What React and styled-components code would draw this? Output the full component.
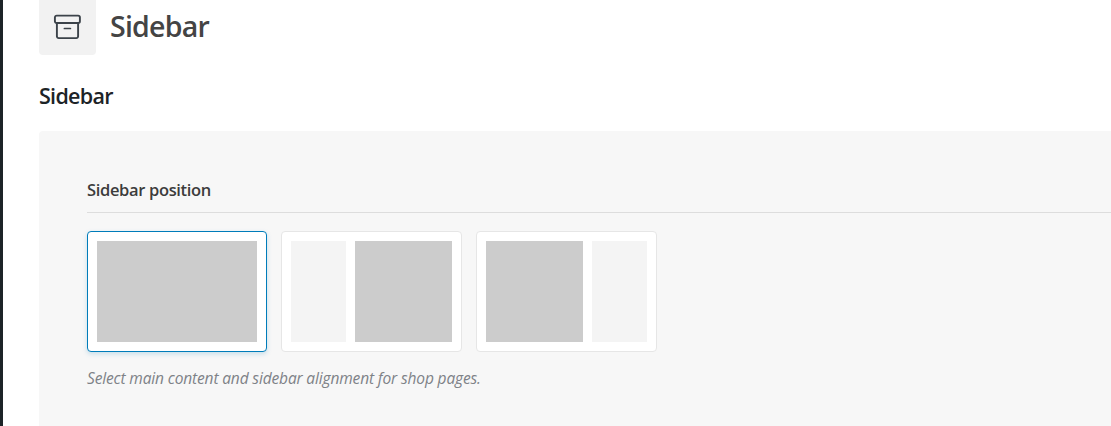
import React, { useState } from 'react';
import styled, { createGlobalStyle } from 'styled-components';

const layouts = [
  { id: 'none', width: 180, blocks: ['content'] },
  { id: 'left', width: 181, blocks: ['sidebar', 'content'] },
  { id: 'right', width: 181, blocks: ['content', 'sidebar'] },
];

const App = () => {
  const [position, setPosition] = useState('none');

  return (
    <>
      <GlobalStyle />
      <Page>
        <Main>
          <Header>
            <IconBox>
              <svg width="29" height="27" viewBox="0 0 29 27" fill="none" stroke="#3c434a" strokeWidth="1.9">
                <rect x="1.9" y="1.6" width="25" height="7.4" rx="1.8" />
                <path d="M3.9 9V22.3a1.8 1.8 0 0 0 1.8 1.8H23.3a1.8 1.8 0 0 0 1.8-1.8V9" />
                <path d="M11.4 14.5H17.4" strokeWidth="1.7" strokeLinecap="round" />
              </svg>
            </IconBox>
            <Title>Sidebar</Title>
          </Header>
          <SectionTitle>Sidebar</SectionTitle>
          <Panel>
            <FieldTitle>Sidebar position</FieldTitle>
            <Options>
              {layouts.map(({ id, width, blocks }) => (
                <Option
                  key={id}
                  type="button"
                  aria-label={id}
                  $width={width}
                  $active={position === id}
                  onClick={() => setPosition(id)}
                >
                  {blocks.map((block) => (
                    <Block key={block} $kind={block} />
                  ))}
                </Option>
              ))}
            </Options>
            <Description>Select main content and sidebar alignment for shop pages.</Description>
          </Panel>
        </Main>
      </Page>
    </>
  );
};

const GlobalStyle = createGlobalStyle`
  * {
    box-sizing: border-box;
  }
  body {
    margin: 0;
    overflow: hidden;
    background: #fff;
    font-family: 'Segoe UI', 'Open Sans', 'Noto Sans', sans-serif;
  }
`;

const Page = styled.div`
  height: 426px;
  overflow: hidden;
  border-left: 3px solid #1d2327;
`;

const Main = styled.main`
  padding-left: 36px;
`;

const Header = styled.header`
  display: flex;
  align-items: center;
  height: 55px;
`;

const IconBox = styled.div`
  display: flex;
  align-items: center;
  justify-content: center;
  width: 57px;
  height: 55px;
  margin-right: 14px;
  background: #f2f2f2;
  border-radius: 0 0 4px 4px;
`;

const Title = styled.h1`
  margin: 0 0 3px;
  font-size: 28.5px;
  line-height: 40px;
  font-weight: 600;
  letter-spacing: -0.75px;
  color: #444;
`;

const SectionTitle = styled.h2`
  margin: 26px 0 21px;
  font-size: 21.5px;
  line-height: 29px;
  font-weight: 600;
  letter-spacing: -0.7px;
  color: #1d2327;
`;

const Panel = styled.section`
  height: 320px;
  padding: 48px 0 0 48px;
  background: #f7f7f7;
  border-radius: 4px 0 0 0;
`;

const FieldTitle = styled.h3`
  height: 34px;
  margin: 0 0 18px;
  border-bottom: 1px solid #ddd;
  font-size: 16.5px;
  line-height: 22px;
  font-weight: 600;
  letter-spacing: -0.34px;
  color: #3c3c3c;
`;

const Options = styled.div`
  display: flex;
  gap: 14px;
`;

const Option = styled.button`
  display: flex;
  gap: 9px;
  width: ${({ $width }) => $width}px;
  height: 121px;
  padding: 9px;
  cursor: pointer;
  background: #fff;
  border: 1px solid ${({ $active }) => ($active ? '#007cba' : '#e6e6e6')};
  border-radius: 4px;
  box-shadow: ${({ $active }) => ($active ? '0 2px 5px rgba(0, 124, 186, 0.2)' : 'none')};
`;

const Block = styled.span`
  flex: ${({ $kind }) => ($kind === 'sidebar' ? '0 0 55px' : '1')};
  height: 101px;
  background: ${({ $kind }) => ($kind === 'sidebar' ? '#f4f4f4' : '#ccc')};
`;

const Description = styled.p`
  margin: 15px 0 0;
  font-size: 15.5px;
  line-height: 22px;
  font-style: italic;
  letter-spacing: -0.14px;
  color: #7e8287;
`;

export default App;
